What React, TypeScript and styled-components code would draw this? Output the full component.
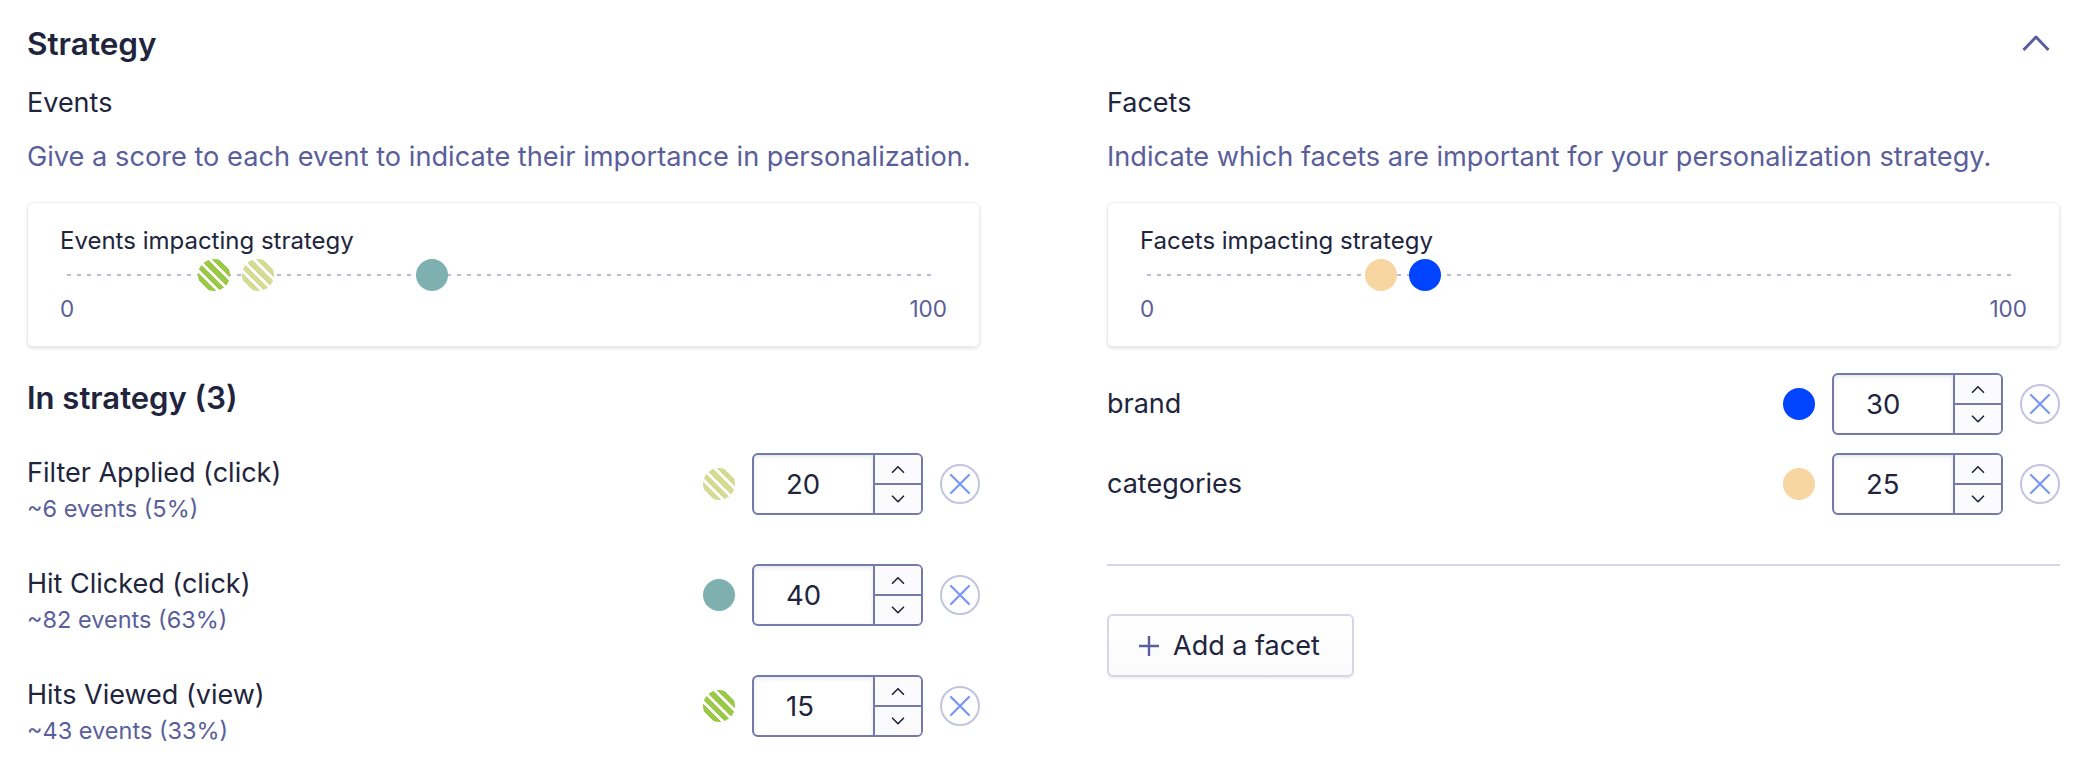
import React from 'react';
import styled, { createGlobalStyle } from 'styled-components';

const colors = {
    text: '#21243d',
    muted: '#5a5e9a',
    inputBorder: '#7579ad',
    light: '#d6d6e7',
    dotLine: '#b9bad7',
    removeRing: '#c3c4df',
    removeX: '#7797f6',
};

type Swatch = { color: string; striped?: boolean };

const swatches: Record<string, Swatch> = {
    hitsViewed: { color: '#9aca45', striped: true },
    filterApplied: { color: '#d4dc93', striped: true },
    hitClicked: { color: '#7fb0b0' },
    brand: { color: '#0044ff' },
    categories: { color: '#f7d6a1' },
};

const events = [
    { name: 'Filter Applied (click)', count: '~6 events (5%)', score: 20, swatch: swatches.filterApplied },
    { name: 'Hit Clicked (click)', count: '~82 events (63%)', score: 40, swatch: swatches.hitClicked },
    { name: 'Hits Viewed (view)', count: '~43 events (33%)', score: 15, swatch: swatches.hitsViewed },
];

const facets = [
    { name: 'brand', score: 30, swatch: swatches.brand },
    { name: 'categories', score: 25, swatch: swatches.categories },
];

const GlobalStyle = createGlobalStyle`
    body {
        margin: 0;
        background: #ffffff;
        font-family: Inter, "Noto Sans", sans-serif;
        color: ${colors.text};
    }
`;

const Page = styled.div`
    padding: 26px 28px 0 27px;
`;

const Header = styled.div`
    display: flex;
    justify-content: space-between;
    align-items: flex-start;
`;

const Title = styled.h2`
    margin: 0;
    font-size: 31.5px;
    line-height: 36px;
    font-weight: 600;
`;

const CollapseButton = styled.button`
    width: 48px;
    height: 34px;
    display: flex;
    align-items: center;
    justify-content: center;
    border: 0;
    padding: 0;
    background: none;
    color: ${colors.muted};
`;

const Columns = styled.div`
    display: grid;
    grid-template-columns: 953px 953px;
    column-gap: 127px;
    margin-top: 25px;
`;

const Column = styled.section`
    display: flex;
    flex-direction: column;
`;

const SectionLabel = styled.div`
    font-size: 27px;
    line-height: 32px;
`;

const Description = styled.p`
    margin: 22px 0 0;
    font-size: 27.2px;
    line-height: 32px;
    color: ${colors.muted};
`;

const Card = styled.div`
    margin-top: 29px;
    padding: 24px 32px;
    border: 1px solid #ebebf1;
    border-radius: 6px;
    box-shadow: 0 2px 3px rgba(35, 38, 59, 0.12);
`;

const CardTitle = styled.div`
    font-size: 24px;
    line-height: 28px;
`;

const Track = styled.div`
    position: relative;
    height: 32px;
    margin: 4px 7px 0;
`;

const TrackLine = styled.div`
    position: absolute;
    left: 0;
    right: 6px;
    top: 15px;
    height: 2px;
    background: repeating-linear-gradient(to right, ${colors.dotLine} 0 4px, transparent 4px 10px);
`;

const Dot = styled.span<{ $color: string; $striped?: boolean; $size?: number }>`
    display: block;
    flex: none;
    width: ${(p) => p.$size || 32}px;
    height: ${(p) => p.$size || 32}px;
    border-radius: 50%;
    background: ${(p) =>
        p.$striped
            ? `repeating-linear-gradient(45deg, ${p.$color} 0 5px, #ffffff 5px 8px)`
            : p.$color};
`;

const TrackDot = styled(Dot)`
    position: absolute;
    top: 0;
`;

const Axis = styled.div`
    display: flex;
    justify-content: space-between;
    margin-top: 5px;
    font-size: 22.5px;
    line-height: 26px;
    color: ${colors.muted};
`;

const SubTitle = styled.h3`
    margin: 33px 0 0;
    font-size: 31px;
    line-height: 36px;
    font-weight: 600;
`;

const EventList = styled.div`
    display: flex;
    flex-direction: column;
    gap: 40px;
    margin-top: 37px;
`;

const EventRow = styled.div`
    display: flex;
    justify-content: space-between;
    align-items: flex-start;
`;

const EventText = styled.div`
    padding-top: 3px;
`;

const RowName = styled.div`
    font-size: 27px;
    line-height: 34px;
`;

const EventCount = styled.div`
    margin-top: 4px;
    font-size: 23.5px;
    line-height: 30px;
    color: ${colors.muted};
`;

const Controls = styled.div`
    display: flex;
    align-items: center;
    gap: 17px;
`;

const NumberBox = styled.div`
    display: flex;
    width: 171px;
    height: 62px;
    box-sizing: border-box;
    border: 2px solid ${colors.inputBorder};
    border-radius: 6px;
    overflow: hidden;
`;

const NumberValue = styled.div`
    flex: 1;
    display: flex;
    align-items: center;
    padding-left: 32px;
    font-size: 27.5px;
    box-shadow: inset 0 2px 4px rgba(35, 38, 59, 0.1);
`;

const Spinner = styled.div`
    width: 46px;
    display: flex;
    flex-direction: column;
    border-left: 2px solid ${colors.inputBorder};
    background: #fbfbfd;
`;

const SpinButton = styled.div<{ $top?: boolean }>`
    flex: 1;
    display: flex;
    align-items: center;
    justify-content: center;
    color: ${colors.text};
    border-bottom: ${(p) => (p.$top ? `2px solid ${colors.inputBorder}` : '0')};
`;

const RemoveButton = styled.button`
    width: 40px;
    height: 40px;
    box-sizing: border-box;
    display: flex;
    align-items: center;
    justify-content: center;
    padding: 0;
    border: 2px solid ${colors.removeRing};
    border-radius: 50%;
    background: #ffffff;
    color: ${colors.removeX};
`;

const FacetList = styled.div`
    display: flex;
    flex-direction: column;
    gap: 18px;
    margin-top: 26px;
`;

const FacetRow = styled.div`
    display: flex;
    justify-content: space-between;
    align-items: center;
`;

const Divider = styled.hr`
    margin: 49px 0 0;
    border: 0;
    height: 2px;
    background: ${colors.light};
`;

const AddButton = styled.button`
    align-self: flex-start;
    display: flex;
    align-items: center;
    gap: 13px;
    height: 63px;
    margin-top: 48px;
    padding: 0 32px 0 29px;
    border: 2px solid ${colors.light};
    border-radius: 6px;
    background: linear-gradient(#ffffff, #fbfbfc);
    box-shadow: 0 2px 1px rgba(35, 38, 59, 0.06);
    font-family: inherit;
    font-size: 27px;
    color: ${colors.text};
`;

const Chevron = ({ up, size = 14 }: { up?: boolean; size?: number }) => (
    <svg width={size} height={size * 0.6} viewBox="0 0 14 8" fill="none">
        <path
            d={up ? 'M1.5 7 L7 1.5 L12.5 7' : 'M1.5 1 L7 6.5 L12.5 1'}
            stroke="currentColor"
            strokeWidth="1.6"
            strokeLinecap="round"
            strokeLinejoin="round"
        />
    </svg>
);

const CrossIcon = () => (
    <svg width="22" height="22" viewBox="0 0 22 22" fill="none">
        <path d="M2 2 L20 20 M20 2 L2 20" stroke="currentColor" strokeWidth="2.2" strokeLinecap="round" />
    </svg>
);

const PlusIcon = () => (
    <svg width="22" height="22" viewBox="0 0 22 22" fill="none">
        <path d="M11 1 V21 M1 11 H21" stroke={colors.muted} strokeWidth="2.4" />
    </svg>
);

const ScoreInput = ({ value }: { value: number }) => (
    <NumberBox>
        <NumberValue>{value}</NumberValue>
        <Spinner>
            <SpinButton $top><Chevron up /></SpinButton>
            <SpinButton><Chevron /></SpinButton>
        </Spinner>
    </NumberBox>
);

const ScoreControls = ({ swatch, value }: { swatch: Swatch; value: number }) => (
    <Controls>
        <Dot $color={swatch.color} $striped={swatch.striped} />
        <ScoreInput value={value} />
        <RemoveButton><CrossIcon /></RemoveButton>
    </Controls>
);

const ImpactCard = ({ title, items }: { title: string; items: { score: number; swatch: Swatch }[] }) => (
    <Card>
        <CardTitle>{title}</CardTitle>
        <Track>
            <TrackLine />
            {items.map((item, i) => (
                <TrackDot key={i} $color={item.swatch.color} $striped={item.swatch.striped}
                    style={{ left: `${item.score}%` }} />
            ))}
        </Track>
        <Axis>
            <span>0</span>
            <span>100</span>
        </Axis>
    </Card>
);

const App: React.FC = () => {
    return (<React.Fragment>
        <GlobalStyle />
        <Page>
            <Header>
                <Title>Strategy</Title>
                <CollapseButton>
                    <svg width="30" height="20" viewBox="0 0 30 20" fill="none">
                        <path d="M2.5 17 L15 4 L27.5 17" stroke="currentColor" strokeWidth="3" strokeLinejoin="round" />
                    </svg>
                </CollapseButton>
            </Header>
            <Columns>
                <Column>
                    <SectionLabel>Events</SectionLabel>
                    <Description>Give a score to each event to indicate their importance in personalization.</Description>
                    <ImpactCard title="Events impacting strategy"
                        items={[...events].sort((a, b) => a.score - b.score)} />
                    <SubTitle>In strategy ({events.length})</SubTitle>
                    <EventList>
                        {events.map((event) => (
                            <EventRow key={event.name}>
                                <EventText>
                                    <RowName>{event.name}</RowName>
                                    <EventCount>{event.count}</EventCount>
                                </EventText>
                                <ScoreControls swatch={event.swatch} value={event.score} />
                            </EventRow>
                        ))}
                    </EventList>
                </Column>
                <Column>
                    <SectionLabel>Facets</SectionLabel>
                    <Description>Indicate which facets are important for your personalization strategy.</Description>
                    <ImpactCard title="Facets impacting strategy"
                        items={[...facets].sort((a, b) => a.score - b.score)} />
                    <FacetList>
                        {facets.map((facet) => (
                            <FacetRow key={facet.name}>
                                <RowName>{facet.name}</RowName>
                                <ScoreControls swatch={facet.swatch} value={facet.score} />
                            </FacetRow>
                        ))}
                    </FacetList>
                    <Divider />
                    <AddButton><PlusIcon />Add a facet</AddButton>
                </Column>
            </Columns>
        </Page>
    </React.Fragment>);
}

export default App;
